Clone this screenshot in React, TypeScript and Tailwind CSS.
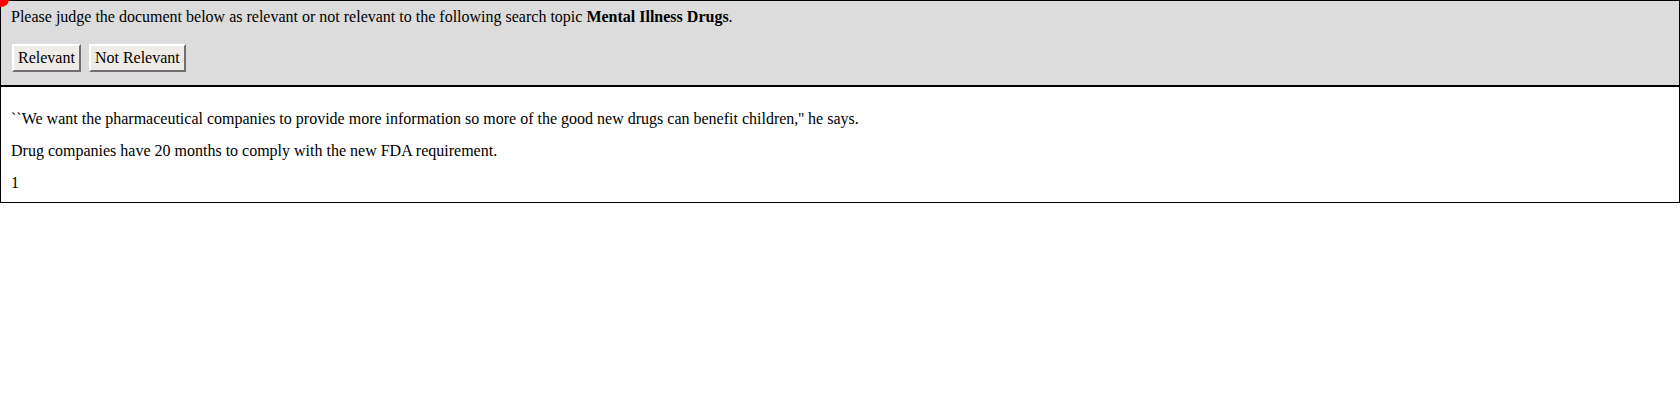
import React from "react";

export default function App() {
  const btn =
    "h-[28px] px-[4px] bg-[#efebe7] border-2 border-t-[#ffffff] border-l-[#ffffff] border-b-[#6f6f6f] border-r-[#6f6f6f] text-[16px] leading-[18px] text-black";
  return (
    <div className="relative w-[1680px] h-[400px] bg-white overflow-hidden text-black" style={{ fontFamily: '"Liberation Serif", "Times New Roman", serif' }}>
      <div className="absolute left-[-7px] top-[-9px] w-[16px] h-[16px] rounded-full bg-[#ff0000] z-10" />
      <div className="border border-black bg-[#dcdcdc] px-[10px] pt-[7px] pb-[13px]">
        <p className="text-[16px] leading-[18px]">
          Please judge the document below as relevant or not relevant to the following search topic <b>Mental Illness Drugs</b>.
        </p>
        <div className="mt-[18px] flex gap-[8px] pl-[1px]">
          <button className={btn}>Relevant</button>
          <button className={btn}>Not Relevant</button>
        </div>
      </div>
      <div className="border border-black px-[10px] pt-[23px] pb-[10px] flex flex-col gap-[14px] text-[16px] leading-[18px]">
        <p>``We want the pharmaceutical companies to provide more information so more of the good new drugs can benefit children,'' he says.</p>
        <p>Drug companies have 20 months to comply with the new FDA requirement.</p>
        <p>1</p>
      </div>
    </div>
  );
}
